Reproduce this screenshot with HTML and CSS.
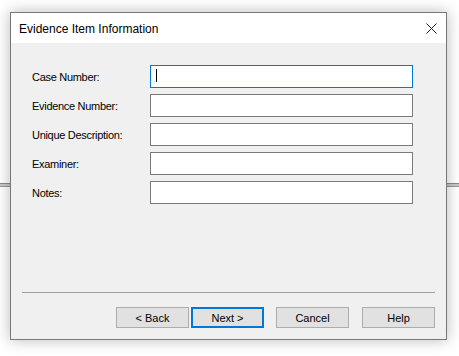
FILE: index.html
```html
<!DOCTYPE html>
<html lang="en">
<head>
    <meta charset="UTF-8">
    <meta name="viewport" content="width=device-width, initial-scale=1.0">
    <title>Evidence Item Information</title>
    <link rel="stylesheet" href="styles.css">
</head>
<body>
    <div class="backdrop-line"></div>

    <div class="dialog">
        <div class="titlebar">
            <span class="title">Evidence Item Information</span>
            <button class="close" aria-label="Close">
                <svg width="11" height="11" viewBox="0 0 11 11">
                    <path d="M0.5 0.5 L10.5 10.5 M10.5 0.5 L0.5 10.5" stroke="#1b1b1b" stroke-width="1" fill="none"/>
                </svg>
            </button>
        </div>

        <div class="content">
            <form class="fields">
                <div class="row">
                    <label for="caseNumber">Case Number:</label>
                    <div class="field focused">
                        <input type="text" id="caseNumber">
                        <span class="caret"></span>
                    </div>
                </div>
                <div class="row">
                    <label for="evidenceNumber">Evidence Number:</label>
                    <div class="field"><input type="text" id="evidenceNumber"></div>
                </div>
                <div class="row">
                    <label for="uniqueDescription">Unique Description:</label>
                    <div class="field"><input type="text" id="uniqueDescription"></div>
                </div>
                <div class="row">
                    <label for="examiner">Examiner:</label>
                    <div class="field"><input type="text" id="examiner"></div>
                </div>
                <div class="row">
                    <label for="notes">Notes:</label>
                    <div class="field"><input type="text" id="notes"></div>
                </div>
            </form>

            <div class="footer">
                <hr class="separator">
                <div class="buttons">
                    <button class="btn">&lt; Back</button>
                    <button class="btn default">Next &gt;</button>
                    <button class="btn cancel">Cancel</button>
                    <button class="btn help">Help</button>
                </div>
            </div>
        </div>
    </div>
</body>
</html>
```

FILE: styles.css
```css
body {
    margin: 0;
    padding: 12px 0 0 10px;
    background: #ffffff;
    font-family: 'Liberation Sans', Arial, sans-serif;
    color: #000000;
    height: 356px;
    box-sizing: border-box;
    overflow: hidden;
}

/* window behind the dialog */
.backdrop-line {
    position: absolute;
    left: 0;
    right: 0;
    top: 183px;
    height: 2px;
    background: #c8c8c8;
    border-top: 1px solid #8a8a8a;
    border-bottom: 1px solid #9a9a9a;
}

.dialog {
    position: relative;
    width: 437px;
    height: 328px;
    box-sizing: border-box;
    border: 1px solid #777777;
    background: #f0f0f0;
    box-shadow: 0 0 14px rgba(0, 0, 0, 0.28);
    display: flex;
    flex-direction: column;
}

.titlebar {
    height: 30px;
    background: #ffffff;
    display: flex;
    align-items: center;
    justify-content: space-between;
    padding: 0 9px 0 8px;
}

.title {
    font-size: 12px;
    color: #000000;
    padding-top: 1px;
}

.close {
    border: none;
    background: none;
    padding: 0;
    width: 11px;
    height: 11px;
    display: flex;
}

.content {
    flex: 1;
    display: flex;
    flex-direction: column;
    padding: 22px 11px 11px 11px;
}

.fields {
    display: flex;
    flex-direction: column;
    gap: 6px;
    padding: 0 22px 0 10px;
}

.row {
    display: flex;
    align-items: center;
    height: 23px;
}

label {
    width: 118px;
    font-size: 11px;
    letter-spacing: -0.3px;
    color: #000000;
}

.field {
    position: relative;
    flex: 1;
    height: 23px;
}

.field input {
    width: 100%;
    height: 100%;
    box-sizing: border-box;
    border: 1px solid #7a7a7a;
    background: #ffffff;
    margin: 0;
    padding: 0 4px;
    outline: none;
}

.field.focused input {
    border-color: #0078d7;
}

.caret {
    position: absolute;
    left: 6px;
    top: 4px;
    width: 1px;
    height: 13px;
    background: #000000;
}

.footer {
    margin-top: auto;
}

.separator {
    margin: 0 0 14px 0;
    border: none;
    border-top: 1px solid #a0a0a0;
    height: 0;
}

.buttons {
    display: flex;
    justify-content: flex-end;
    gap: 2px;
}

.btn {
    width: 73px;
    height: 21px;
    box-sizing: border-box;
    border: 1px solid #adadad;
    background: #e1e1e1;
    font-family: 'Liberation Sans', Arial, sans-serif;
    font-size: 11px;
    color: #000000;
    padding: 0;
}

.btn.default {
    border: 2px solid #0078d7;
}

.btn.cancel {
    margin-left: 10px;
}

.btn.help {
    margin-left: 11px;
}
```
